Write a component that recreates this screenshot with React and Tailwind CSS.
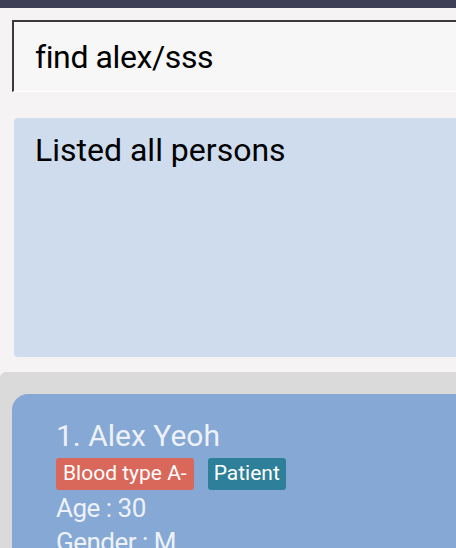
export default function App() {
  return (
    <div
      className="w-[456px] h-[548px] overflow-hidden bg-[#f5f3f3] flex flex-col"
      style={{ fontFamily: 'Roboto, "Open Sans", sans-serif' }}
    >
      {/* Title bar strip */}
      <div className="h-[8px] bg-[#3c3f55] shrink-0" />

      {/* Command box */}
      <div className="pt-[12px] pl-[12px] shrink-0">
        <div className="h-[72px] border-l-2 border-t-2 border-[#3a3a3a] bg-[#f7f7f7] border-b border-b-white flex items-center pl-[21px]">
          <span className="text-[32px] tracking-[-0.4px] text-black leading-none">find alex/sss</span>
        </div>
      </div>

      {/* Result display */}
      <div className="pt-[26px] pl-[14px] shrink-0">
        <div className="h-[239px] bg-[#cfdcee] rounded-l-[4px] pl-[21px] pt-[12px]">
          <p className="text-[32px] tracking-[0px] text-black leading-tight">Listed all persons</p>
        </div>
      </div>

      {/* Person list */}
      <div className="mt-[15px] flex-1 bg-[#dadada] rounded-tl-[6px] pt-[22px] pl-[12px]">
        <div className="h-full bg-[#85a8d4] rounded-tl-[16px] pl-[44px] pt-[25px] text-[#eef2f8]">
          <p className="text-[30px] leading-[1.1]">1. Alex Yeoh</p>
          <div className="flex gap-[14px] mt-[6px]">
            <span className="h-[32px] px-[7px] flex items-center rounded-[3px] bg-[#d9685b] text-white text-[21px]">Blood type A-</span>
            <span className="h-[32px] px-[6px] flex items-center rounded-[3px] bg-[#2e7f99] text-white text-[21px]">Patient</span>
          </div>
          <p className="text-[26px] leading-[34px] mt-[1px] tracking-[-0.5px]">Age : 30</p>
          <p className="text-[26px] leading-[34px] tracking-[-0.5px]">Gender : M</p>
        </div>
      </div>
    </div>
  )
}
